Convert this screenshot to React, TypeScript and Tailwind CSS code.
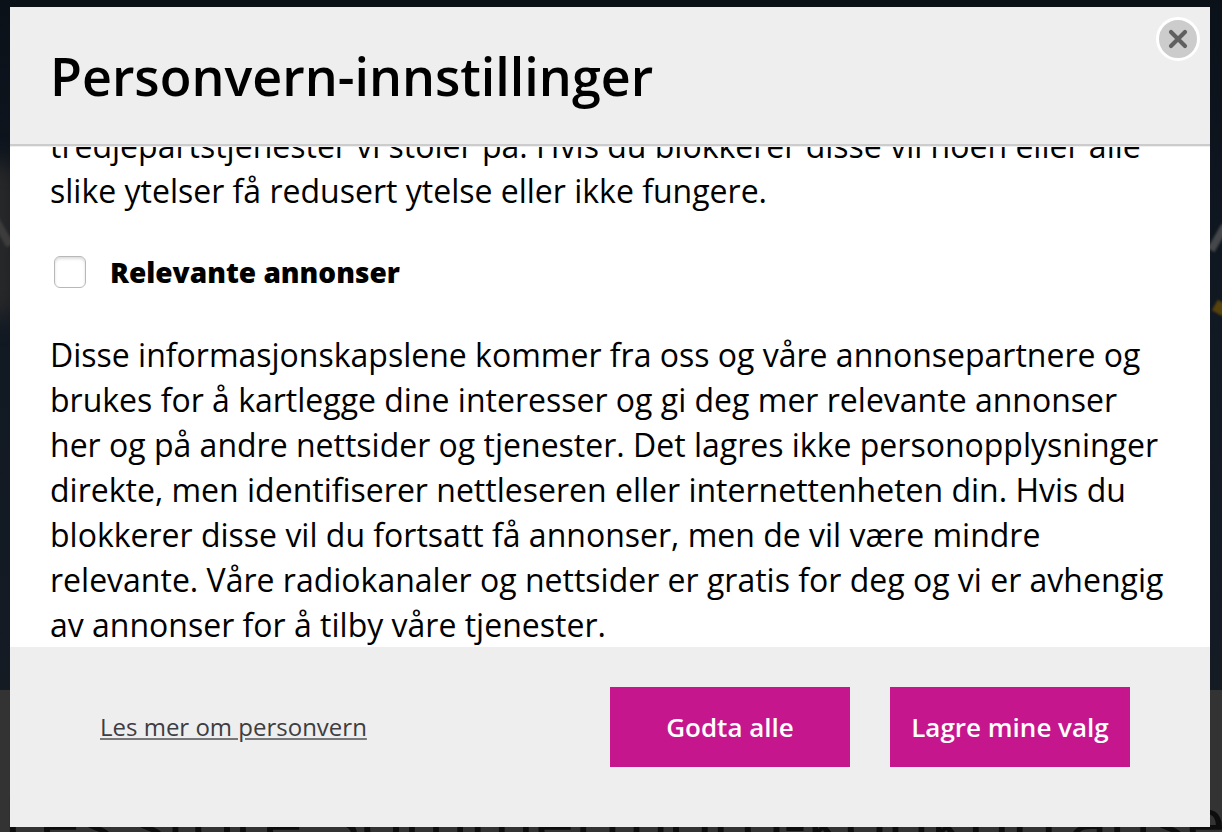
import React from "react";

export default function App() {
  return (
    <div className="relative h-screen overflow-hidden bg-[#333333] font-['Open_Sans',sans-serif] text-black">
      <div aria-hidden="true" className="absolute inset-0">
        <div className="relative h-[690px] overflow-hidden bg-linear-to-b from-[#0b1119] via-[#111923] to-[#141b23]">
          <div className="absolute -left-6 top-40 h-40 w-10 rounded-full bg-[#2a2a2a] blur-md" />
          <div className="absolute -left-1 top-[208px] h-10 w-2 -rotate-30 bg-[#3c3c3c] blur-[1px]" />
          <div className="absolute right-0 top-[224px] h-7 w-2 rotate-30 bg-[#45474a] blur-[1px]" />
          <div className="absolute -right-1 top-[302px] h-3 w-3 rotate-30 bg-[#57420b] blur-[1px]" />
        </div>
        <p className="whitespace-nowrap pl-[3px] pt-[86px] text-[71px] leading-[90px] text-[#0d0d0d]">
          Les store Sommermoro-konkurranse
        </p>
      </div>

      <div className="relative flex h-full pb-[5px] pl-[10px] pr-3 pt-[7px]">
        <section
          role="dialog"
          aria-labelledby="title"
          className="relative flex min-h-0 w-full flex-col bg-white"
        >
          <header className="relative z-10 border-b-2 border-[#cccccc] bg-[#eeeeee] px-10 pb-8 pt-[33px] shadow-[0_1px_0_#eeeeee]">
            <h1 id="title" className="text-[52px] font-semibold leading-[72px]">
              Personvern-innstillinger
            </h1>
            <button
              type="button"
              aria-label="Lukk"
              className="absolute right-[10px] top-[10px] flex size-11 items-center justify-center rounded-full border-3 border-white bg-[#cccccc]"
            >
              <svg viewBox="0 0 20 20" className="size-5" fill="none" stroke="#606060" strokeWidth="4.2" strokeLinecap="round">
                <path d="M3 3l14 14M17 3L3 17" />
              </svg>
            </button>
          </header>

          <main className="flex min-h-0 flex-1 flex-col justify-end overflow-hidden px-10 text-[32px] leading-[45px]">
            <p>
              tredjepartstjenester vi stoler på. Hvis du blokkerer disse vil noen eller alle slike ytelser få redusert
              ytelse eller ikke fungere.
            </p>
            <label className="flex items-center gap-6 pb-[37px] pl-1 pt-9 text-[28px] font-extrabold leading-[46px]">
              <input
                type="checkbox"
                className="size-8 appearance-none rounded-md border border-[#b8b8b8] bg-white shadow-[inset_0_2px_3px_#dddddd]"
              />
              Relevante annonser
            </label>
            <p>
              Disse informasjonskapslene kommer fra oss og våre annonsepartnere og brukes for å kartlegge dine
              interesser og gi deg mer relevante annonser her og på andre nettsider og tjenester. Det lagres ikke
              personopplysninger direkte, men identifiserer nettleseren eller internettenheten din. Hvis du blokkerer
              disse vil du fortsatt få annonser, men de vil være mindre relevante. Våre radiokanaler og nettsider er
              gratis for deg og vi er avhengig av annonser for å tilby våre tjenester.
            </p>
          </main>

          <footer className="flex items-center justify-between bg-[#eeeeee] pb-15 pl-[90px] pr-20 pt-10">
            <a href="#personvern" className="text-[24px] leading-8 text-[#3d3d42] underline decoration-[#77777a]">
              Les mer om personvern
            </a>
            <div className="flex gap-10">
              <button type="button" className="h-20 w-60 bg-[#c6168d] text-[26px] font-semibold text-white">
                Godta alle
              </button>
              <button type="button" className="h-20 w-60 bg-[#c6168d] text-[26px] font-semibold text-white">
                Lagre mine valg
              </button>
            </div>
          </footer>
        </section>
      </div>
    </div>
  );
}
